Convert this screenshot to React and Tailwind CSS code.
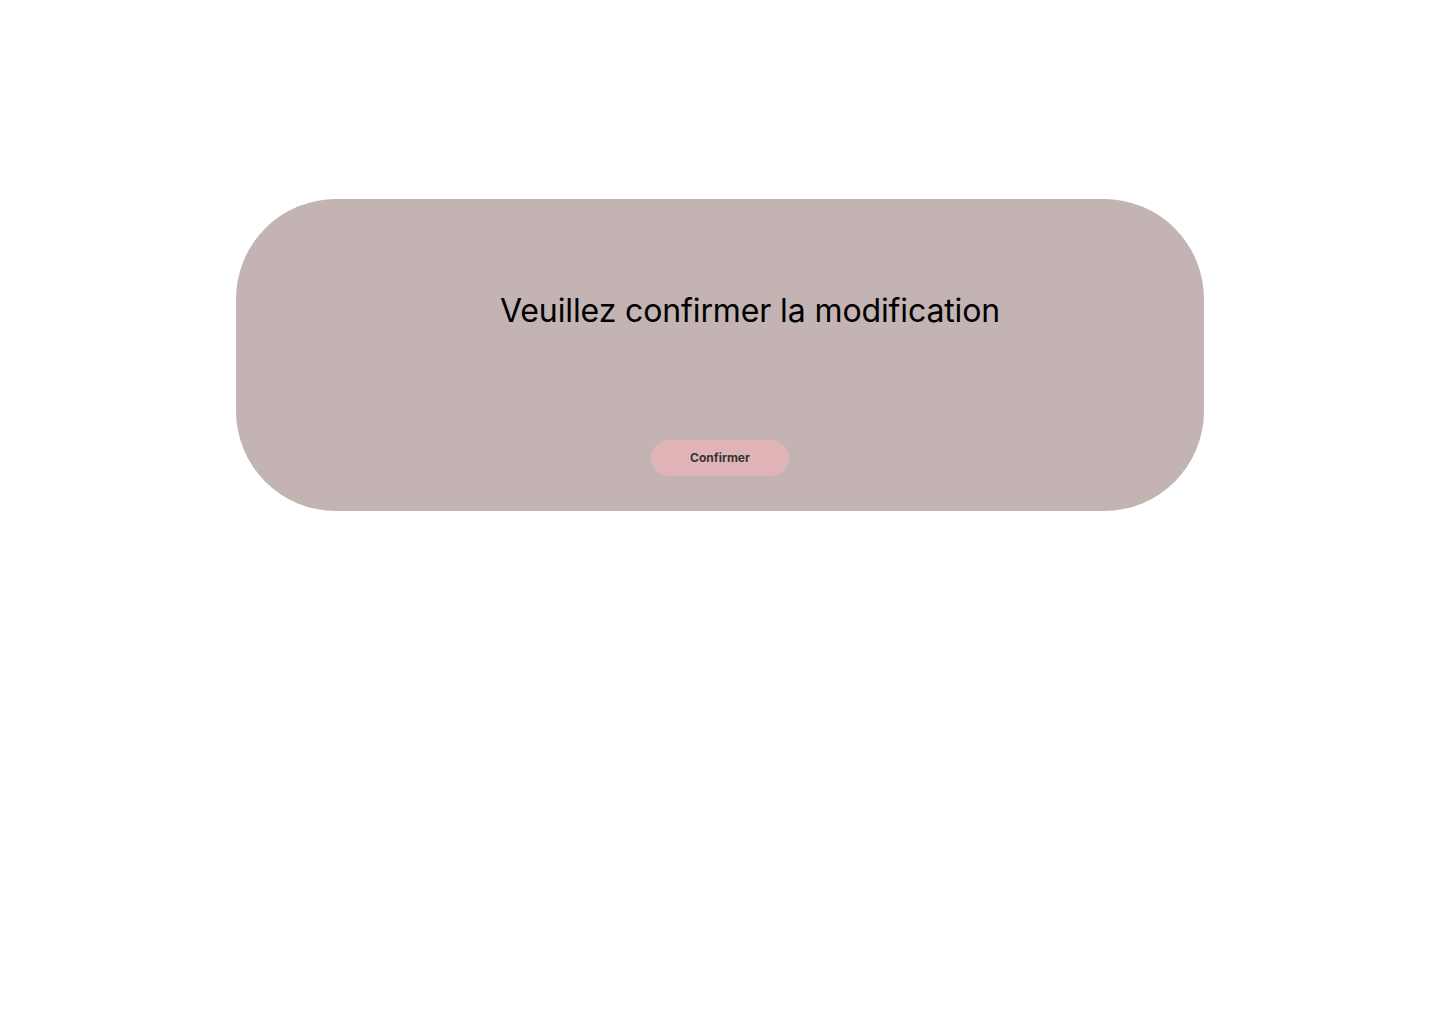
export default function App() {
  return (
    <div className="w-full h-[1024px] bg-white pt-[199px] pl-[236px]" style={{ fontFamily: 'Inter, "Noto Sans", sans-serif' }}>
      <div className="w-[968px] h-[312px] rounded-[100px] bg-[#c3b3b3] flex flex-col pt-[92px]">
        <h1 className="pl-[264px] text-[32px] leading-[39px] tracking-[-0.12px] font-normal text-black">
          Veuillez confirmer la modification
        </h1>
        <div className="flex justify-center mt-[110px]">
          <button className="w-[138px] h-[36px] rounded-full bg-[#e0b4b6] text-[12px] font-bold text-[#333333]">
            Confirmer
          </button>
        </div>
      </div>
    </div>
  );
}
